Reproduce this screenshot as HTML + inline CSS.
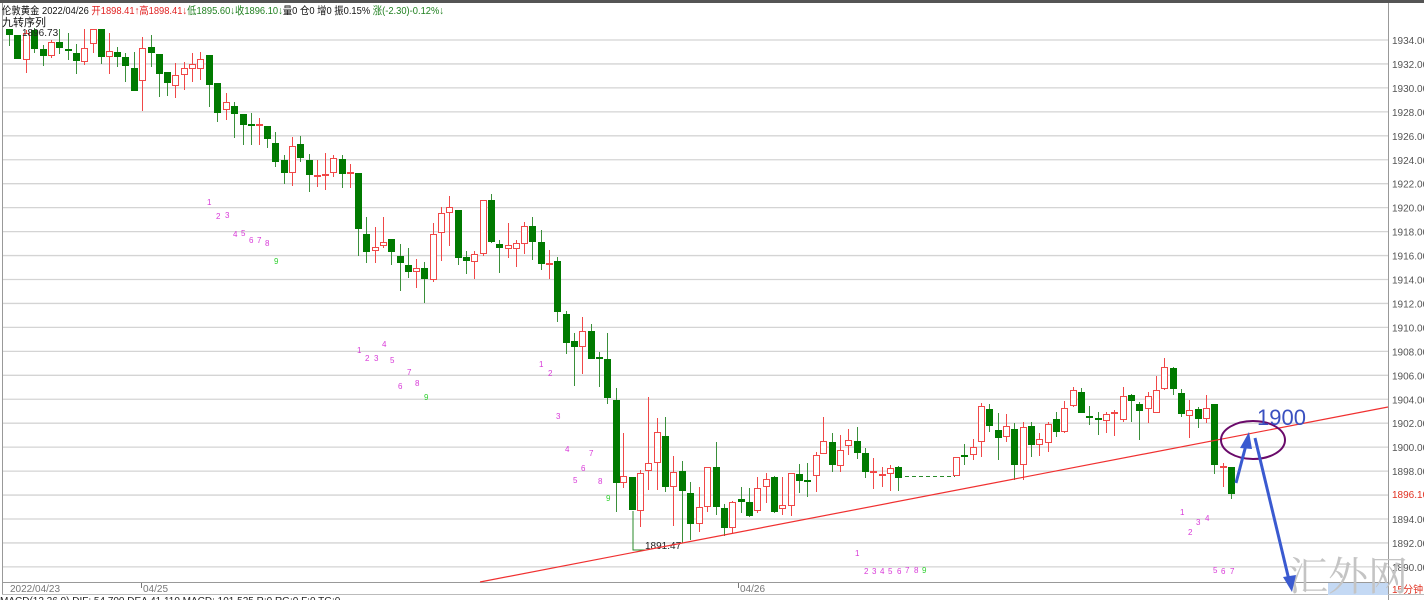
<!DOCTYPE html>
<html><head><meta charset="utf-8"><style>
html,body{margin:0;padding:0;background:#fff;width:1424px;height:600px;overflow:hidden;font-family:"Liberation Sans","Noto Sans CJK SC",sans-serif}
svg{position:absolute;left:0;top:0}
</style></head><body>
<svg id="s" width="1424" height="600" xmlns="http://www.w3.org/2000/svg" font-family="Liberation Sans, Noto Sans CJK SC, sans-serif">
<rect x="0" y="0" width="1424" height="3" fill="#555"/>
<g id="grid"></g>
<line x1="2.5" y1="3" x2="2.5" y2="595" stroke="#999"/>
<line x1="1388.5" y1="3" x2="1388.5" y2="600" stroke="#999"/>
<line x1="2" y1="582.5" x2="1388" y2="582.5" stroke="#999"/>
<line x1="2" y1="594.5" x2="1424" y2="594.5" stroke="#bbb"/>
<line x1="905" y1="476.5" x2="955" y2="476.5" stroke="#2a8a2a" stroke-dasharray="4,3"/>
<g id="c"></g>
<polyline points="633,511 633,550 645,550" fill="none" stroke="#2a8a2a"/>
<text x="645" y="549" font-size="10" fill="#222">1891.47</text>
<text x="22" y="36" font-size="10" fill="#222">1896.73</text>
<line x1="480" y1="582" x2="1388" y2="407" stroke="#f03030" stroke-width="1.2"/>
<g id="td" font-size="8"></g>
<g id="ax" font-size="10" fill="#555"></g>
<text x="1392" y="498" font-size="10" fill="#e03020">1896.10</text>
<rect x="1328" y="583" width="60" height="12" fill="#c4d9f4"/>
<text x="1392" y="593" font-size="10" fill="#e03020">15分钟</text>
<text x="10" y="592" font-size="10" fill="#777">2022/04/23</text>
<text x="143" y="592" font-size="10" fill="#777">04/25</text>
<text x="740" y="592" font-size="10" fill="#777">04/26</text>
<line x1="141.5" y1="583" x2="141.5" y2="588" stroke="#777"/>
<line x1="738.5" y1="583" x2="738.5" y2="588" stroke="#777"/>
<text x="0" y="604" font-size="10" fill="#222">MACD(12,26,9)  DIF: 54.700  DEA 41.110  MACD: 101.525  R:0  RG:0  F:0  TG:0</text>
<text x="1288" y="590" font-size="40" fill="#c4c4c4" font-family="Noto Serif CJK SC, serif">汇外网</text>
<ellipse cx="1253" cy="440" rx="32" ry="19" fill="none" stroke="#6a0a6a" stroke-width="2"/>
<text x="1257" y="425" font-size="22" fill="#3a50c0">1900</text>
<line x1="1236" y1="483" x2="1246" y2="445" stroke="#3a5ad0" stroke-width="3"/>
<polygon points="1249,432 1240,448 1252,449" fill="#3a5ad0"/>
<line x1="1255" y1="438" x2="1289" y2="580" stroke="#3a5ad0" stroke-width="3"/>
<polygon points="1292,592 1283,577 1296,575" fill="#3a5ad0"/>
<text x="2" y="14" font-size="10.5" textLength="442" lengthAdjust="spacingAndGlyphs"><tspan fill="#111">伦敦黄金 2022/04/26 </tspan><tspan fill="#e02020">开1898.41↑高1898.41↓</tspan><tspan fill="#208020">低1895.60↓收1896.10↓</tspan><tspan fill="#111">量0  仓0  增0 振0.15% </tspan><tspan fill="#208020">涨(-2.30)-0.12%↓</tspan></text>
<text x="2" y="26" font-size="11" fill="#111">九转序列</text>
</svg>
<script>
var NS="http://www.w3.org/2000/svg";
function el(p,t,a,txt){var e=document.createElementNS(NS,t);for(var k in a)e.setAttribute(k,a[k]);if(txt!=null)e.textContent=txt;p.appendChild(e);return e}
var g=document.getElementById('grid'),ax=document.getElementById('ax');
for(var i=0;i<=22;i++){var y=40+i*23.95;if(y>580)break;el(g,'line',{x1:2,y1:y,x2:1388,y2:y,stroke:'#d4d4d4','stroke-width':1.3});
if(1934-2*i!=1896)el(ax,'text',{x:1392,y:y+4},(1934-2*i).toFixed(2));}
var D=[[9,29,35,29,46,'g'],[17,35,59,35,59,'g'],[26,33,60,30,73,'r'],[34,30,49,28,53,'g'],[43,49,56,45,66,'g'],[51,42,56,40,58,'r'],[59,42,48,29,54,'g'],[68,49,51,33,60,'g'],[76,53,61,44,74,'g'],[84,48,62,29,65,'r'],[93,29,44,29,53,'r'],[101,29,57,29,64,'g'],[109,51,57,33,74,'r'],[117,52,57,47,67,'g'],[125,57,66,53,82,'g'],[134,68,91,52,91,'g'],[142,48,81,37,111,'r'],[151,47,53,35,67,'g'],[159,54,74,54,97,'g'],[167,72,83,72,96,'g'],[175,75,86,63,98,'r'],[184,68,75,62,90,'r'],[192,64,69,53,82,'r'],[200,59,69,52,80,'r'],[209,55,85,55,107,'g'],[217,83,113,83,122,'g'],[226,102,110,93,120,'r'],[234,106,114,102,138,'g'],[243,114,125,114,145,'g'],[251,124,126,113,145,'g'],[259,124,125,118,145,'r'],[267,126,139,126,148,'g'],[275,143,162,132,167,'g'],[284,160,173,155,184,'g'],[292,146,173,137,186,'r'],[300,144,158,136,162,'g'],[309,160,175,154,192,'g'],[317,175,177,160,187,'r'],[325,174,175,153,190,'r'],[333,158,173,155,177,'r'],[342,159,174,155,188,'g'],[350,172,174,164,188,'r'],[358,173,229,173,256,'g'],
[366,234,252,217,263,'g'],[375,247,251,227,263,'r'],[383,242,246,217,248,'r'],[391,239,252,239,265,'g'],[400,256,263,244,291,'g'],[408,265,272,248,278,'g'],[416,268,272,259,288,'r'],[424,268,279,262,303,'g'],[433,234,280,223,282,'r'],[441,213,233,207,261,'r'],[449,207,213,196,246,'r'],[458,210,258,210,265,'g'],[466,257,261,251,274,'g'],[474,254,262,251,279,'r'],[483,200,254,200,256,'r'],[491,200,242,194,243,'g'],[499,244,248,240,273,'g'],[508,245,249,223,258,'r'],[516,243,249,240,267,'r'],[524,226,244,222,254,'r'],[532,226,242,217,260,'g'],[541,242,264,230,270,'g'],[549,263,265,250,279,'r'],[557,261,312,257,322,'g'],[566,314,343,311,354,'g'],[574,341,347,333,386,'g'],[582,331,347,317,374,'r'],[591,331,359,324,359,'g'],[599,357,359,352,387,'g'],[607,359,398,333,404,'g'],[616,400,483,388,512,'g'],
[623,476,483,433,488,'r'],[632,477,510,477,510,'g'],[640,473,511,470,527,'r'],[648,463,471,397,490,'r'],[657,432,463,418,490,'r'],[665,436,487,417,492,'g'],[673,472,487,456,526,'r'],[682,471,491,461,543,'g'],[690,493,524,482,540,'g'],[699,507,524,487,532,'r'],[707,467,507,467,512,'r'],[716,467,507,442,515,'g'],[724,508,528,504,536,'g'],[732,502,528,501,533,'r'],[741,499,502,487,513,'g'],[749,502,516,488,517,'g'],[757,488,511,477,513,'r'],[766,479,487,473,503,'r'],[774,477,512,476,513,'g'],[782,505,509,477,515,'r'],[791,473,506,473,516,'r'],[799,474,481,464,493,'g'],[807,480,482,463,497,'g'],[816,455,476,452,492,'r'],[823,441,454,417,454,'r'],[832,442,465,433,472,'g'],[840,450,466,435,472,'r'],[848,440,446,429,455,'r'],[857,441,453,427,459,'g'],[865,453,472,448,478,'g'],[873,471,473,458,489,'r'],[882,474,476,467,487,'r'],[890,468,474,465,491,'r'],[898,467,478,466,491,'g'],
[956,457,476,457,476,'r'],[964,455,457,444,465,'g'],[973,447,455,439,460,'r'],[981,406,442,403,457,'r'],[989,409,426,404,432,'g'],[998,430,438,413,460,'g'],[1006,426,437,414,442,'r'],[1014,429,465,423,480,'g'],[1023,427,465,422,480,'r'],[1031,426,445,422,457,'g'],[1039,439,445,433,456,'r'],[1048,424,443,422,452,'r'],[1056,419,432,412,437,'g'],[1064,408,432,401,433,'r'],[1073,390,406,387,407,'r'],[1081,392,413,388,413,'g'],[1089,416,418,406,425,'g'],[1098,418,420,412,435,'g'],[1106,414,421,412,433,'r'],[1114,412,414,410,436,'r'],[1123,396,420,387,422,'r'],[1131,395,401,394,422,'g'],[1139,404,411,402,440,'g'],[1148,396,409,392,423,'r'],[1156,390,413,376,413,'r'],[1164,367,389,358,390,'r'],[1173,368,389,367,395,'g'],[1181,393,414,389,417,'g'],[1189,410,416,400,438,'r'],[1198,409,419,407,428,'g'],[1206,408,419,395,423,'r'],[1214,404,465,404,474,'g'],[1223,466,468,463,487,'r'],[1231,467,494,467,499,'g']];
var c=document.getElementById('c');
D.forEach(function(d){var x=d[0],gr=d[5]=='g';
el(c,'line',{x1:x+.5,y1:d[3],x2:x+.5,y2:d[4],stroke:gr?'#3a8f3a':'#f04848'});
var h=Math.max(d[2]-d[1],1.5);
if(gr)el(c,'rect',{x:x-3,y:d[1],width:7,height:h,fill:'#007a00'});
else el(c,'rect',{x:x-2.5,y:d[1]+.5,width:6,height:Math.max(h-1,1),fill:'#fff',stroke:'#f04848'});});
var T=[[209,202,1],[218,216,2],[227,215,3],[235,234,4],[243,233,5],[251,240,6],[259,240,7],[267,243,8],[276,261,9],
[359,350,1],[367,358,2],[376,358,3],[384,344,4],[392,360,5],[400,386,6],[409,372,7],[417,383,8],[426,397,9],
[541,364,1],[550,373,2],[558,416,3],[567,449,4],[575,480,5],[583,468,6],[591,453,7],[600,481,8],[608,498,9],
[857,553,1],[866,571,2],[874,571,3],[882,571,4],[890,571,5],[899,571,6],[907,570,7],[916,570,8],[924,570,9],
[1182,512,1],[1190,532,2],[1198,522,3],[1207,518,4],[1215,570,5],[1223,571,6],[1232,571,7]];
var td=document.getElementById('td');
T.forEach(function(t){el(td,'text',{x:t[0]-2,y:t[1]+3,fill:t[2]==9?'#30d030':'#d838d8'},String(t[2]))});
</script>
</body></html>
